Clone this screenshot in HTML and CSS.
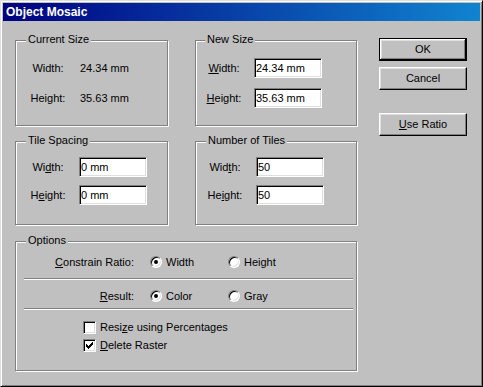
FILE: index.html
```html
<!DOCTYPE html>
<html lang="en">
<head>
  <meta charset="UTF-8" />
  <title>Object Mosaic</title>
  <link rel="stylesheet" href="styles.css">
</head>
<body>

  <div class="window">
    <div class="titlebar">Object Mosaic</div>

    <div class="client">
      <div class="panels">

        <div class="group current">
          <div class="group-title">Current Size</div>
          <div class="row first"><span class="lbl">Width:</span><span class="val">24.34 mm</span></div>
          <div class="row"><span class="lbl">Height:</span><span class="val">35.63 mm</span></div>
        </div>

        <div class="group newsize">
          <div class="group-title">New Size</div>
          <div class="row first"><span class="lbl"><u>W</u>idth:</span><input class="field" value="24.34 mm"></div>
          <div class="row"><span class="lbl"><u>H</u>eight:</span><input class="field" value="35.63 mm"></div>
        </div>

        <div class="group spacing">
          <div class="group-title">Tile Spacing</div>
          <div class="row first"><span class="lbl">Wi<u>d</u>th:</span><input class="field" value="0 mm"></div>
          <div class="row"><span class="lbl">H<u>e</u>ight:</span><input class="field" value="0 mm"></div>
        </div>

        <div class="group tiles">
          <div class="group-title">Number of Tiles</div>
          <div class="row first"><span class="lbl">Wid<u>t</u>h:</span><input class="field" value="50"></div>
          <div class="row"><span class="lbl">He<u>i</u>ght:</span><input class="field" value="50"></div>
        </div>

        <div class="group options">
          <div class="group-title">Options</div>

          <div class="opt-row first">
            <span class="opt-label"><u>C</u>onstrain Ratio:</span>
            <span class="radio-opt"><span class="radio checked"></span><span>Width</span></span>
            <span class="radio-opt"><span class="radio"></span><span>Height</span></span>
          </div>
          <div class="sep"></div>

          <div class="opt-row">
            <span class="opt-label"><u>R</u>esult:</span>
            <span class="radio-opt"><span class="radio checked"></span><span>Color</span></span>
            <span class="radio-opt"><span class="radio"></span><span>Gray</span></span>
          </div>
          <div class="sep second"></div>

          <div class="chk-row first">
            <span class="check"></span>
            <span>Resi<u>z</u>e using Percentages</span>
          </div>
          <div class="chk-row">
            <span class="check">
              <svg width="7" height="7" viewBox="0 0 7 7" shape-rendering="crispEdges">
                <path d="M0 2h1v3h-1z M1 3h1v3h-1z M2 4h1v3h-1z M3 3h1v3h-1z M4 2h1v3h-1z M5 1h1v3h-1z M6 0h1v3h-1z" fill="#000"/>
              </svg>
            </span>
            <span><u>D</u>elete Raster</span>
          </div>
        </div>

      </div>

      <div class="buttons">
        <button class="btn default">OK</button>
        <button class="btn">Cancel</button>
        <button class="btn ratio"><u>U</u>se Ratio</button>
      </div>
    </div>
  </div>

</body>
</html>
```

FILE: styles.css
```css
* { box-sizing: border-box; }

body {
  margin: 0;
  font-family: "Liberation Sans", Arial, sans-serif;
  font-size: 11px;
  line-height: 13px;
  color: #000;
}

u { text-decoration: underline; text-underline-offset: 1px; }

.window {
  width: 483px;
  height: 387px;
  background: #c0c0c0;
  border: 1px solid;
  border-color: #dfdfdf #000 #000 #dfdfdf;
  box-shadow: inset 1px 1px #fff, inset -1px -1px #808080;
  padding: 2px;
}

.titlebar {
  height: 18px;
  padding-left: 3px;
  background: linear-gradient(to right, #000080, #1084d0);
  color: #fff;
  font-weight: bold;
  font-size: 12px;
  line-height: 18px;
}

.client {
  display: flex;
  padding: 19px 0 0 12px;
}

.panels {
  display: grid;
  grid-template-columns: 153px 162px;
  column-gap: 27px;
  row-gap: 15px;
}

.group {
  border: 1px solid #808080;
  box-shadow: inset 1px 1px #fff, 1px 1px #fff;
}

.group-title {
  width: fit-content;
  margin: -8px 0 0 10px;
  padding: 0 2px;
  background: #c0c0c0;
}

.current, .newsize { height: 86px; }
.spacing, .tiles { height: 84px; }

.newsize .group-title { margin-left: 9px; }

.row {
  display: flex;
  align-items: center;
  height: 20px;
  margin-top: 10px;
}
.current .row.first, .newsize .row.first { margin-top: 12px; }
.spacing .row, .tiles .row { margin-top: 8px; }
.spacing .row.first, .tiles .row.first { margin-top: 10px; }

.lbl {
  width: 40px;
  text-align: center;
  margin-left: 12px;
}
.val { margin-left: 12px; }

.newsize .lbl { margin-left: 8px; }
.tiles .lbl { margin-left: 9px; }

.field {
  width: 68px;
  height: 20px;
  margin: 0 0 0 11px;
  padding: 0 1px;
  font: inherit;
  color: #000;
  background: #fff;
  border: 1px solid;
  border-color: #808080 #fff #fff #808080;
  box-shadow: inset 1px 1px #000, inset -1px -1px #dfdfdf;
  outline: none;
}
.newsize .field { margin-left: 10px; }

.options {
  grid-column: 1 / 3;
  height: 130px;
  margin-top: 1px;
}

.opt-row {
  display: flex;
  align-items: center;
  height: 20px;
  margin-top: 6px;
}
.opt-row.first { margin-top: 5px; }

.opt-label {
  width: 118px;
  margin-right: 16px;
  text-align: right;
}

.radio-opt {
  display: flex;
  align-items: center;
  gap: 4px;
  width: 78px;
}

.radio {
  position: relative;
  width: 12px;
  height: 12px;
  border-radius: 50%;
  border: 1px solid;
  border-color: #808080 #fff #fff #808080;
  background: #fff;
  box-shadow: inset 1px 1px #000, inset -1px -1px #dfdfdf;
}
.radio.checked::after {
  content: "";
  position: absolute;
  left: 3px;
  top: 3px;
  width: 4px;
  height: 4px;
  border-radius: 50%;
  background: #000;
}

.sep {
  height: 2px;
  margin: 6px 3px 0 8px;
  border-top: 1px solid #808080;
  border-bottom: 1px solid #fff;
}
.sep.second { margin-top: 2px; }

.chk-row {
  display: flex;
  align-items: center;
  gap: 4px;
  height: 18px;
  margin-left: 67px;
}
.chk-row.first { margin-top: 8px; }

.check {
  display: flex;
  align-items: center;
  justify-content: center;
  width: 13px;
  height: 13px;
  background: #fff;
  border: 1px solid;
  border-color: #808080 #fff #fff #808080;
  box-shadow: inset 1px 1px #000, inset -1px -1px #dfdfdf;
}

.buttons {
  display: flex;
  flex-direction: column;
  gap: 6px;
  margin: -2px 0 0 22px;
}

.btn {
  width: 88px;
  height: 23px;
  padding: 0;
  font: inherit;
  color: #000;
  background: #c0c0c0;
  border: 1px solid;
  border-color: #fff #000 #000 #fff;
  box-shadow: inset -1px -1px #808080, inset 1px 1px #dfdfdf;
}

.btn.default {
  border-color: #000;
  box-shadow: inset -1px -1px #000, inset 1px 1px #fff, inset -2px -2px #808080, inset 2px 2px #dfdfdf;
}

.btn.ratio { margin-top: 17px; }
```
